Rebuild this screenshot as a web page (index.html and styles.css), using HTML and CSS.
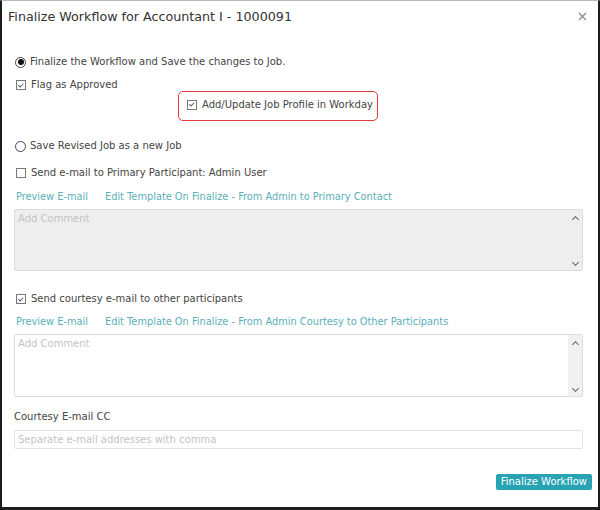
FILE: index.html
```html
<!DOCTYPE html>
<html>
<head>
<meta charset="utf-8">
<link rel="stylesheet" href="styles.css">
</head>
<body>
<div class="dialog">
  <div class="header">
    <div class="title">Finalize Workflow for Accountant I - 1000091</div>
    <svg class="close" width="9" height="9" viewBox="0 0 9 9"><path d="M1 1L8 8M8 1L1 8" stroke="#888" stroke-width="1.2"/></svg>
  </div>
  <div class="content">
    <div class="row r1"><span class="radio on"></span><span>Finalize the Workflow and Save the changes to Job.</span></div>
    <div class="row r2"><span class="cb checked"></span><span>Flag as Approved</span></div>
    <div class="hl-wrap"><div class="hl"><span class="cb checked"></span><span>Add/Update Job Profile in Workday</span></div></div>
    <div class="row r3"><span class="radio"></span><span>Save Revised Job as a new Job</span></div>
    <div class="row r4"><span class="cb"></span><span>Send e-mail to Primary Participant: Admin User</span></div>
    <div class="links l1"><span>Preview E-mail</span><span>Edit Template On Finalize - From Admin to Primary Contact</span></div>
    <div class="ta gray t1"><div class="ph">Add Comment</div><div class="sb"><span class="up"></span><span class="down"></span></div></div>
    <div class="row r5"><span class="cb checked"></span><span>Send courtesy e-mail to other participants</span></div>
    <div class="links l2"><span>Preview E-mail</span><span>Edit Template On Finalize - From Admin Courtesy to Other Participants</span></div>
    <div class="ta t2"><div class="ph">Add Comment</div><div class="sb"><span class="up"></span><span class="down"></span></div></div>
    <div class="label">Courtesy E-mail CC</div>
    <div class="input"><span class="ph">Separate e-mail addresses with comma</span></div>
    <div class="footer"><span class="btn">Finalize Workflow</span></div>
  </div>
</div>
</body>
</html>
```
FILE: styles.css
```css
html, body { margin: 0; padding: 0; background: #fff; }
body { font-family: "DejaVu Sans", Verdana, sans-serif; color: #444; font-size: 10px; }
.dialog {
  width: 600px; height: 510px; box-sizing: border-box;
  border-top: 1px solid #b5b5b5;
  border-left: 2px solid #1c1c1c; border-right: 2px solid #1c1c1c; border-bottom: 3px solid #1c1c1c;
  background: #fff;
}
.header { height: 30px; display: flex; align-items: center; justify-content: space-between; padding: 0 11px 0 6px; }
.title { font-size: 12.7px; color: #333; }
.close { display: block; }
.content { padding: 0 15px 0 12px; }
.row { display: flex; align-items: center; height: 14px; line-height: 14px; }
.r1 { margin-top: 24px; padding-left: 1px; }
.r2 { margin-top: 9px; padding-left: 2px; }
.r3 { margin-top: 18px; padding-left: 1px; }
.r4 { margin-top: 13px; padding-left: 2px; }
.r5 { margin-top: 21px; padding-left: 2px; }
.radio { width: 9px; height: 9px; border: 1px solid #444; border-radius: 50%; margin-right: 4px; display: flex; align-items: center; justify-content: center; }
.radio.on::after { content: ""; width: 6px; height: 6px; border-radius: 50%; background: #111; }
.cb { width: 8px; height: 8px; border: 1px solid #777; margin-right: 5px; display: flex; align-items: center; justify-content: center; }
.cb.checked::after { content: ""; width: 4px; height: 2px; border-left: 1px solid #555; border-bottom: 1px solid #555; transform: rotate(-45deg) translate(0, -1px); }
.hl-wrap { margin-top: -1px; padding-left: 164px; }
.hl { display: inline-flex; align-items: center; height: 30px; box-sizing: border-box; width: 200px; border: 1.5px solid #e8373f; border-radius: 5px; padding: 0 0 3px 8px; }
.links { display: flex; height: 14px; line-height: 14px; color: #5aafb8; padding-left: 2px; font-size: 9.8px; }
.links span:first-child { margin-right: 17px; }
.l1 { margin-top: 10px; }
.l2 { margin-top: 9px; }
.ta { display: flex; margin-top: 5px; border: 1px solid #dcdcdc; box-sizing: border-box; border-radius: 2px; }
.ta.gray { background: #eeeeee; }
.t1 { height: 62px; }
.t2 { height: 63px; }
.ta .ph { flex: 1; color: #c4c4c4; padding: 2px 0 0 3px; line-height: 14px; }
.sb { width: 14px; display: flex; flex-direction: column; justify-content: space-between; align-items: center; padding: 5px 0 3px; }
.t2 .sb { background: #f1f1f1; }
.up, .down { width: 4px; height: 4px; border-left: 1.3px solid #666; border-top: 1.3px solid #666; }
.up { transform: rotate(45deg); margin-top: 2px; }
.down { transform: rotate(-135deg); margin-bottom: 2px; }
.label { margin-top: 13px; height: 14px; line-height: 14px; color: #444; }
.input { margin-top: 6px; height: 19px; border: 1px solid #e3e3e3; box-sizing: border-box; border-radius: 2px; display: flex; align-items: center; padding-left: 3px; }
.input .ph { color: #c4c4c4; }
.footer { display: flex; justify-content: flex-end; margin-top: 25px; margin-right: -9px; }
.btn { background: #27a3b4; color: #fff; height: 16px; line-height: 16px; padding: 0 5px; border-radius: 2px; font-size: 10px; }
```
